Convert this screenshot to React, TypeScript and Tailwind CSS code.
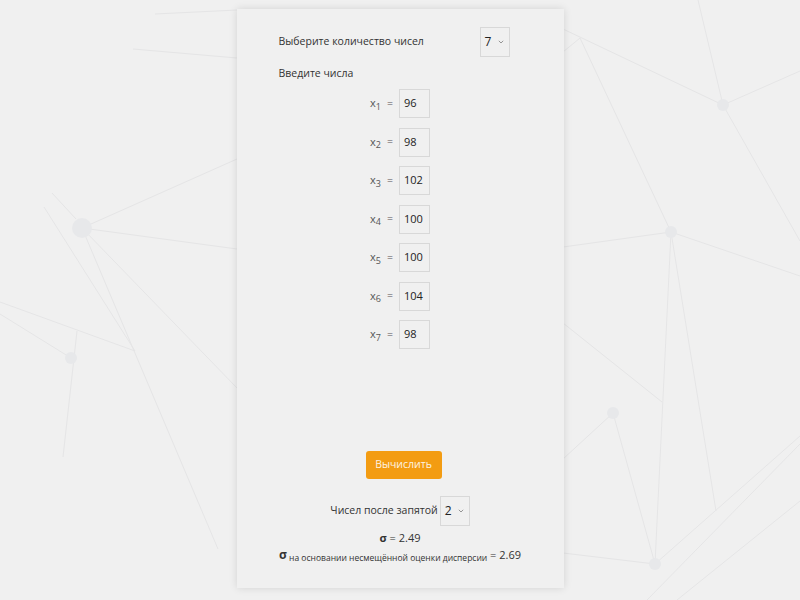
import React from "react";

const lines: [number, number, number, number][] = [
  [155, 14, 237, 10],
  [133, 49, 237, 58],
  [52, 193, 76, 219],
  [44, 207, 135, 351],
  [82, 228, 237, 159],
  [82, 228, 237, 249],
  [82, 228, 237, 388],
  [82, 228, 218, 549],
  [0, 302, 135, 351],
  [0, 314, 71, 358],
  [77, 331, 63, 457],
  [563, 29, 723, 105],
  [563, 52, 580, 38],
  [580, 38, 671, 232],
  [698, 0, 723, 105],
  [723, 105, 800, 71],
  [723, 105, 800, 241],
  [563, 247, 671, 232],
  [671, 232, 800, 276],
  [671, 232, 655, 564],
  [671, 232, 716, 511],
  [563, 323, 662, 402],
  [563, 459, 613, 413],
  [613, 413, 655, 564],
  [563, 553, 655, 564],
  [655, 564, 800, 436],
  [800, 444, 647, 600],
  [800, 501, 677, 600],
];

const nodes: [number, number, number][] = [
  [82, 228, 10],
  [71, 358, 6],
  [723, 105, 6],
  [671, 232, 6],
  [613, 413, 6],
  [655, 564, 6],
];

function Background() {
  return (
    <svg
      className="absolute inset-0"
      width="800"
      height="600"
      viewBox="0 0 800 600"
    >
      {lines.map(([x1, y1, x2, y2], i) => (
        <line
          key={i}
          x1={x1}
          y1={y1}
          x2={x2}
          y2={y2}
          stroke="#e5e5e6"
          strokeWidth="1"
        />
      ))}
      {nodes.map(([cx, cy, r], i) => (
        <circle key={i} cx={cx} cy={cy} r={r} fill="#e7e8ea" />
      ))}
    </svg>
  );
}

function Chevron() {
  return (
    <svg width="6" height="4" viewBox="0 0 6 4" className="ml-auto">
      <path d="M0.8 0.8 L3 3 L5.2 0.8" fill="none" stroke="#8a8a8a" strokeWidth="0.9" />
    </svg>
  );
}

function SelectBox({ value }: { value: string }) {
  return (
    <div className="flex h-[30px] w-[30px] items-center border border-[#d8d8d8] bg-[#f0f0f0] pl-[4px] pr-[5px] text-[12px] text-[#222]">
      <span>{value}</span>
      <Chevron />
    </div>
  );
}

const values = ["96", "98", "102", "100", "100", "104", "98"];

export default function App() {
  return (
    <div
      className="relative h-[600px] w-[800px] overflow-hidden bg-[#f0f0f0]"
      style={{ fontFamily: '"Open Sans", "Noto Sans", sans-serif' }}
    >
      <Background />
      <div className="relative mx-auto mt-[9px] flex h-[579px] w-[327px] flex-col bg-[#f0f0f0] px-[42px] pt-[18px] text-[10.5px] text-[#333] shadow-[0_0_8px_rgba(0,0,0,0.12)]">
        <div className="flex h-[30px] items-center justify-between pr-[12px]">
          <span>Выберите количество чисел</span>
          <SelectBox value="7" />
        </div>
        <div className="mt-[7px] leading-[18px]">Введите числа</div>
        <div className="mt-[7px] flex flex-col items-center gap-[9.5px]">
          {values.map((v, i) => (
            <div key={i} className="flex h-[29px] items-center">
              <span className="text-[11px] text-[#555]">
                x<sub className="text-[9px]">{i + 1}</sub>
              </span>
              <span className="ml-[6px] mr-[6px] text-[#555]">=</span>
              <div className="flex h-[29px] w-[31px] items-center border border-[#d8d8d8] bg-[#f0f0f0] pl-[4px] text-[11px] text-[#222]">
                {v}
              </div>
            </div>
          ))}
        </div>
        <div className="mt-[102px] flex justify-center pl-[7px]">
          <button className="h-[28px] w-[76px] rounded-[3px] bg-[#f39c12] text-[10.5px] text-[#fdf3e3]">
            Вычислить
          </button>
        </div>
        <div className="mt-[17px] flex items-center justify-center gap-[2px]">
          <span>Чисел после запятой</span>
          <SelectBox value="2" />
        </div>
        <div className="mt-[4px] text-center leading-[16px] text-[11px]">
          <b>σ</b> = 2.49
        </div>
        <div className="text-center leading-[18px] whitespace-nowrap text-[11px]">
          <b className="text-[12px]">σ</b>
          <sub className="text-[8.5px]"> на основании несмещённой оценки дисперсии</sub> = 2.69
        </div>
      </div>
    </div>
  );
}
